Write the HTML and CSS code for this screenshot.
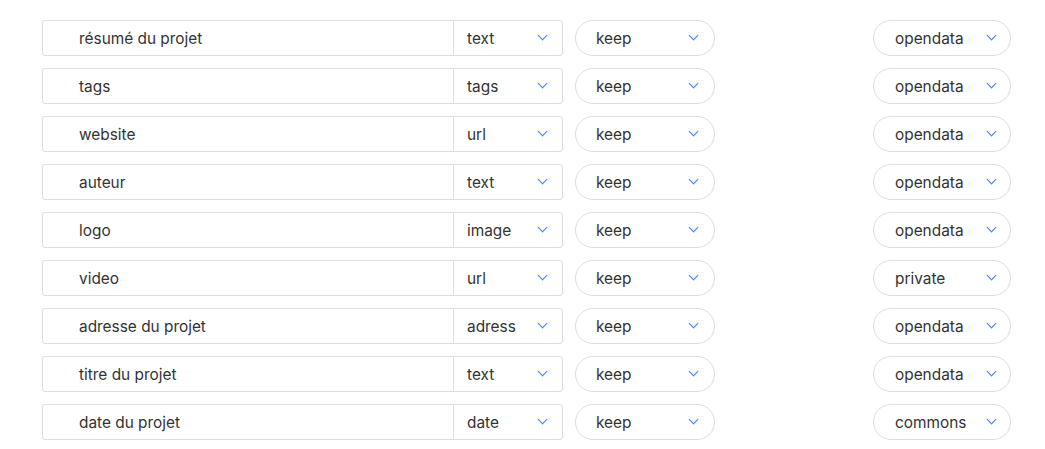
FILE: index.html
```html
<!DOCTYPE html>
<html lang="fr">
<head>
<meta charset="utf-8">
<title>Champs</title>
<link rel="stylesheet" href="styles.css">
</head>
<body>
<div class="list">
  <div class="row">
    <div class="group"><div class="field">résumé du projet</div><div class="select">text<span class="chev"></span></div></div>
    <div class="pill keep">keep<span class="chev"></span></div>
    <div class="pill scope">opendata<span class="chev"></span></div>
  </div>
  <div class="row">
    <div class="group"><div class="field">tags</div><div class="select">tags<span class="chev"></span></div></div>
    <div class="pill keep">keep<span class="chev"></span></div>
    <div class="pill scope">opendata<span class="chev"></span></div>
  </div>
  <div class="row">
    <div class="group"><div class="field">website</div><div class="select">url<span class="chev"></span></div></div>
    <div class="pill keep">keep<span class="chev"></span></div>
    <div class="pill scope">opendata<span class="chev"></span></div>
  </div>
  <div class="row">
    <div class="group"><div class="field">auteur</div><div class="select">text<span class="chev"></span></div></div>
    <div class="pill keep">keep<span class="chev"></span></div>
    <div class="pill scope">opendata<span class="chev"></span></div>
  </div>
  <div class="row">
    <div class="group"><div class="field">logo</div><div class="select">image<span class="chev"></span></div></div>
    <div class="pill keep">keep<span class="chev"></span></div>
    <div class="pill scope">opendata<span class="chev"></span></div>
  </div>
  <div class="row">
    <div class="group"><div class="field">video</div><div class="select">url<span class="chev"></span></div></div>
    <div class="pill keep">keep<span class="chev"></span></div>
    <div class="pill scope">private<span class="chev"></span></div>
  </div>
  <div class="row">
    <div class="group"><div class="field">adresse du projet</div><div class="select">adress<span class="chev"></span></div></div>
    <div class="pill keep">keep<span class="chev"></span></div>
    <div class="pill scope">opendata<span class="chev"></span></div>
  </div>
  <div class="row">
    <div class="group"><div class="field">titre du projet</div><div class="select">text<span class="chev"></span></div></div>
    <div class="pill keep">keep<span class="chev"></span></div>
    <div class="pill scope">opendata<span class="chev"></span></div>
  </div>
  <div class="row">
    <div class="group"><div class="field">date du projet</div><div class="select">date<span class="chev"></span></div></div>
    <div class="pill keep">keep<span class="chev"></span></div>
    <div class="pill scope">commons<span class="chev"></span></div>
  </div>
</div>
</body>
</html>
```

FILE: styles.css
```css
html, body {
  margin: 0;
  padding: 0;
  background: #ffffff;
}

body {
  font-family: "Inter", "Liberation Sans", Arial, sans-serif;
  font-size: 15.4px;
  color: #333333;
}

.list {
  display: flex;
  flex-direction: column;
  gap: 12px;
  padding: 20px 0 0 42px;
}

.row {
  display: flex;
  align-items: center;
  height: 36px;
}

.group {
  display: flex;
  height: 36px;
  width: 521px;
  border: 1px solid #dddddd;
  border-radius: 3px;
  box-sizing: border-box;
}

.field {
  width: 411px;
  box-sizing: border-box;
  border-right: 1px solid #dddddd;
  padding-left: 36px;
  display: flex;
  align-items: center;
}

.select {
  flex: 1;
  display: flex;
  align-items: center;
  justify-content: space-between;
  padding: 0 16px 0 13px;
}

.pill {
  height: 36px;
  box-sizing: border-box;
  border: 1px solid #dddddd;
  border-radius: 18px;
  display: flex;
  align-items: center;
  justify-content: space-between;
}

.keep {
  width: 140px;
  margin-left: 12px;
  padding: 0 17px 0 20px;
}

.scope {
  width: 138px;
  margin-left: 158px;
  padding: 0 15px 0 21px;
}

.chev {
  width: 7px;
  height: 7px;
  border-right: 1.5px solid #3b7ff0;
  border-bottom: 1.5px solid #3b7ff0;
  transform: translateY(-3px) rotate(45deg);
  box-sizing: border-box;
}
```
